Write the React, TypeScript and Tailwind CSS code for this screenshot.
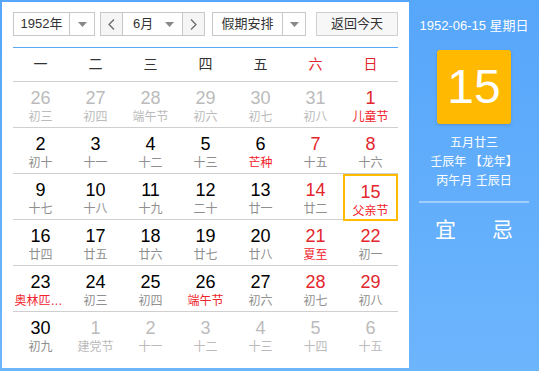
import { useState } from 'react'

type Day = {
  n: number
  lunar: string
  other?: boolean
  red?: boolean
  fest?: boolean
}

const WEEK = ['一', '二', '三', '四', '五', '六', '日']

const ROWS: Day[][] = [
  [
    { n: 26, lunar: '初三', other: true },
    { n: 27, lunar: '初四', other: true },
    { n: 28, lunar: '端午节', other: true },
    { n: 29, lunar: '初六', other: true },
    { n: 30, lunar: '初七', other: true },
    { n: 31, lunar: '初八', other: true },
    { n: 1, lunar: '儿童节', red: true, fest: true },
  ],
  [
    { n: 2, lunar: '初十' },
    { n: 3, lunar: '十一' },
    { n: 4, lunar: '十二' },
    { n: 5, lunar: '十三' },
    { n: 6, lunar: '芒种', fest: true },
    { n: 7, lunar: '十五', red: true },
    { n: 8, lunar: '十六', red: true },
  ],
  [
    { n: 9, lunar: '十七' },
    { n: 10, lunar: '十八' },
    { n: 11, lunar: '十九' },
    { n: 12, lunar: '二十' },
    { n: 13, lunar: '廿一' },
    { n: 14, lunar: '廿二', red: true },
    { n: 15, lunar: '父亲节', red: true, fest: true },
  ],
  [
    { n: 16, lunar: '廿四' },
    { n: 17, lunar: '廿五' },
    { n: 18, lunar: '廿六' },
    { n: 19, lunar: '廿七' },
    { n: 20, lunar: '廿八' },
    { n: 21, lunar: '夏至', red: true, fest: true },
    { n: 22, lunar: '初一', red: true },
  ],
  [
    { n: 23, lunar: '奥林匹克日', fest: true },
    { n: 24, lunar: '初三' },
    { n: 25, lunar: '初四' },
    { n: 26, lunar: '端午节', fest: true },
    { n: 27, lunar: '初六' },
    { n: 28, lunar: '初七', red: true },
    { n: 29, lunar: '初八', red: true },
  ],
  [
    { n: 30, lunar: '初九' },
    { n: 1, lunar: '建党节', other: true },
    { n: 2, lunar: '十一', other: true },
    { n: 3, lunar: '十二', other: true },
    { n: 4, lunar: '十三', other: true },
    { n: 5, lunar: '十四', other: true },
    { n: 6, lunar: '十五', other: true },
  ],
]

function Caret(): JSX.Element {
  return (
    <svg width="9" height="5" viewBox="0 0 9 5" className="fill-[#888]">
      <path d="M0 0h9L4.5 5z" />
    </svg>
  )
}

function Chevron({ dir }: { dir: 'l' | 'r' }): JSX.Element {
  return (
    <svg width="7" height="11" viewBox="0 0 7 11" fill="none" stroke="#666" strokeWidth="1.2">
      {dir === 'l' ? <path d="M6 0.5L1 5.5l5 5" /> : <path d="M1 0.5l5 5-5 5" />}
    </svg>
  )
}

function Cell({ d, selected }: { d: Day; selected: boolean }): JSX.Element {
  const numColor = d.other ? 'text-[#bbb]' : d.red ? 'text-[#e3262e]' : 'text-black'
  const lunarColor = d.other
    ? 'text-[#bbb]'
    : d.fest
      ? 'text-[#f2232b]'
      : 'text-[#8f8f8f]'
  return (
    <div
      className={`flex flex-col items-center pt-[6px] ${
        selected ? 'border-2 border-[#ffbb00] pt-[4px]' : ''
      }`}
    >
      <span className={`text-[18px] leading-[20px] ${numColor}`}>{d.n}</span>
      {/* long festival names get cut with an ellipsis, as in the widget */}
      <span
        className={`mt-[2px] max-w-[52px] truncate text-[12px] leading-[15px] ${lunarColor}`}
      >
        {d.lunar}
      </span>
    </div>
  )
}

export default function App(): JSX.Element {
  const [selected] = useState('2-6')

  return (
    <div
      className="flex h-[371px] w-[539px] bg-gradient-to-b from-[#56a6fa] to-[#6db5fd] text-[#333]"
      style={{ fontFamily: '"Liberation Sans", "Noto Sans CJK SC", sans-serif' }}
    >
      {/* calendar */}
      <div className="mb-[3px] ml-[2px] mt-[2px] flex w-[407px] flex-col bg-white px-[11px] pt-[10px]">
        <div className="flex h-[24px] text-[13px]">
          <div className="flex w-[82px] border border-[#c8c8c8]">
            <span className="flex w-[56px] items-center justify-center border-r border-[#c8c8c8]">
              1952年
            </span>
            <span className="flex flex-1 items-center justify-center">
              <Caret />
            </span>
          </div>
          <div className="ml-[5px] flex w-[105px] border border-[#c8c8c8]">
            <span className="flex w-[22px] items-center justify-center border-r border-[#c8c8c8] bg-[#f5f5f5]">
              <Chevron dir="l" />
            </span>
            <span className="flex flex-1 items-center pl-[10px]">
              6月
              <span className="ml-auto mr-[8px]">
                <Caret />
              </span>
            </span>
            <span className="flex w-[22px] items-center justify-center border-l border-[#c8c8c8] bg-[#f5f5f5]">
              <Chevron dir="r" />
            </span>
          </div>
          <div className="ml-[7px] flex w-[94px] border border-[#c8c8c8]">
            <span className="flex w-[70px] items-center justify-center border-r border-[#c8c8c8]">
              假期安排
            </span>
            <span className="flex flex-1 items-center justify-center">
              <Caret />
            </span>
          </div>
          <button className="ml-auto flex w-[82px] items-center justify-center border border-[#d0d0d0] bg-[#f7f7f7] text-[13px] text-[#333]">
            返回今天
          </button>
        </div>

        <div className="mt-[11px] h-[1px] bg-[#5aa9f6]" />

        <div className="grid h-[34px] grid-cols-7 items-center border-b border-[#cfcfcf] text-[14px]">
          {WEEK.map((w, i) => (
            <span key={w} className={`text-center ${i >= 5 ? 'text-[#e3262e]' : 'text-[#333]'}`}>
              {w}
            </span>
          ))}
        </div>

        {ROWS.map((row, r) => (
          <div
            key={r}
            className={`grid h-[46px] grid-cols-7 ${r < 5 ? 'border-b border-[#cfcfcf]' : ''}`}
          >
            {row.map((d, c) => (
              <Cell key={c} d={d} selected={selected === `${r}-${c}`} />
            ))}
          </div>
        ))}
      </div>

      {/* detail panel */}
      <div className="flex flex-1 flex-col items-center text-white">
        <div className="mt-[17px] text-[13px] leading-[18px]">1952-06-15 星期日</div>
        <div className="mt-[15px] flex h-[74px] w-[74px] items-center justify-center rounded-[3px] bg-[#ffb900] text-[48px] font-light leading-none shadow-[0_1px_3px_rgba(0,0,0,0.15)]">
          15
        </div>
        <div className="mt-[10px] flex flex-col items-center text-[12px] leading-[19px]">
          <span>五月廿三</span>
          <span>壬辰年 【龙年】</span>
          <span>丙午月 壬辰日</span>
        </div>
        <div className="mt-[10px] h-[2px] w-[110px] bg-white/40" />
        <div className="mt-[14px] flex w-[110px] justify-between px-[16px] text-[21px] leading-[26px]">
          <span>宜</span>
          <span>忌</span>
        </div>
      </div>
    </div>
  )
}
